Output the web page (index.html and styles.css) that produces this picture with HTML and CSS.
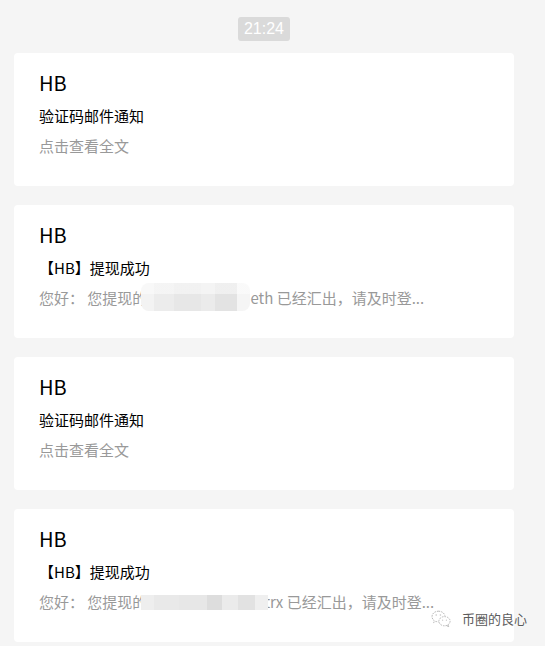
FILE: index.html
```html
<!DOCTYPE html>
<html lang="zh-CN">
<head>
    <meta charset="UTF-8">
    <meta name="viewport" content="width=device-width, initial-scale=1.0">
    <title>HB</title>
    <link rel="stylesheet" href="styles.css">
</head>
<body>

<div class="chat">
    <div class="time-row"><span class="time">21:24</span></div>

    <div class="msg">
        <div class="sender">HB</div>
        <div class="subject">验证码邮件通知</div>
        <div class="digest">点击查看全文</div>
    </div>

    <div class="msg">
        <div class="sender">HB</div>
        <div class="subject">【HB】提现成功</div>
        <div class="digest">您好： 您提现的<span class="blur blur-tall"></span>eth 已经汇出，请及时登...</div>
    </div>

    <div class="msg">
        <div class="sender">HB</div>
        <div class="subject">验证码邮件通知</div>
        <div class="digest">点击查看全文</div>
    </div>

    <div class="msg">
        <div class="sender">HB</div>
        <div class="subject">【HB】提现成功</div>
        <div class="digest">您好： 您提现的<span class="blur blur-flat"></span>trx 已经汇出，请及时登...</div>
    </div>
</div>

<div class="watermark">
    <svg class="wm-icon" width="20" height="18" viewBox="0 0 20 18">
        <path d="M7.5 1.2C3.8 1.2 1 3.6 1 6.6c0 1.6 .8 3 2.1 4l-.6 2 2.3-1.2c.8.3 1.7.4 2.7.4" fill="none" stroke="#b8b8b8" stroke-width="1" stroke-dasharray="1.6 1"/>
        <path d="M7.5 1.2c3.3 0 6 2 6.4 4.6" fill="none" stroke="#b8b8b8" stroke-width="1" stroke-dasharray="1.6 1"/>
        <ellipse cx="13.5" cy="11.2" rx="5.6" ry="4.6" fill="none" stroke="#b8b8b8" stroke-width="1" stroke-dasharray="1.6 1"/>
        <path d="M16.8 14.8l.9 1.8-2.2-1" fill="none" stroke="#b8b8b8" stroke-width="1"/>
        <circle cx="5.2" cy="5" r=".8" fill="#c4c4c4"/>
        <circle cx="9.4" cy="5" r=".8" fill="#c4c4c4"/>
        <circle cx="11.6" cy="10.2" r=".6" fill="#c4c4c4"/>
        <circle cx="15.4" cy="10.2" r=".6" fill="#c4c4c4"/>
    </svg>
    <span>币圈的良心</span>
</div>

</body>
</html>
```

FILE: styles.css
```css
body {
    margin: 0;
    background: #f5f5f5;
    font-family: "Noto Sans CJK SC", "Noto Sans", sans-serif;
    color: #111;
    position: relative;
    height: 646px;
    overflow: hidden;
}
.chat {
    width: 500px;
    padding: 17px 13px 0 14px;
    display: flex;
    flex-direction: column;
    gap: 19px;
}
.time-row {
    display: flex;
    justify-content: center;
    margin-bottom: -7px;
}
.time {
    background: #dadada;
    color: #fff;
    font-family: "Liberation Sans", Arial, sans-serif;
    font-size: 16px;
    line-height: 24px;
    padding: 0 6px;
    border-radius: 3px;
}
.msg {
    background: #fff;
    border-radius: 4px;
    padding: 14px 25px 25px;
}
.sender {
    font-size: 20px;
    line-height: 32px;
    margin-bottom: 2px;
    color: #000;
}
.subject {
    font-size: 15px;
    line-height: 30px;
    color: #000;
}
.digest {
    font-size: 15px;
    line-height: 30px;
    color: #999;
    white-space: nowrap;
}
.blur {
    display: inline-block;
    position: relative;
    margin-left: -6px;
}
.blur-tall {
    width: 109px;
    height: 28px;
    vertical-align: top;
    border-radius: 8px;
    background:
        linear-gradient(to bottom, rgba(255, 255, 255, 0.45) 0 40%, transparent 40%),
        linear-gradient(to right, #f3f3f3 0 12%, #ececec 12% 30%, #e7e7e7 30% 55%, #ebebeb 55% 68%, #e3e3e3 68% 88%, #f5f5f5 88%);
}
.blur-flat {
    width: 127px;
    height: 15px;
    vertical-align: -2px;
    margin-right: -4px;
    background: linear-gradient(to right, #eeeeee 0 10%, #e9e9e9 10% 30%, #e7e7e7 30% 52%, #dddddd 52% 64%, #ebebeb 64% 76%, #e2e2e2 76% 90%, #efefef 90%);
}
.watermark {
    position: absolute;
    left: 431px;
    top: 609px;
    display: flex;
    align-items: center;
    gap: 11px;
    font-size: 13px;
    line-height: 20px;
    color: #5c5c5c;
    text-shadow: 0 0 2px #fff, 0 0 1px #fff;
}
.wm-icon {
    display: block;
}
```
